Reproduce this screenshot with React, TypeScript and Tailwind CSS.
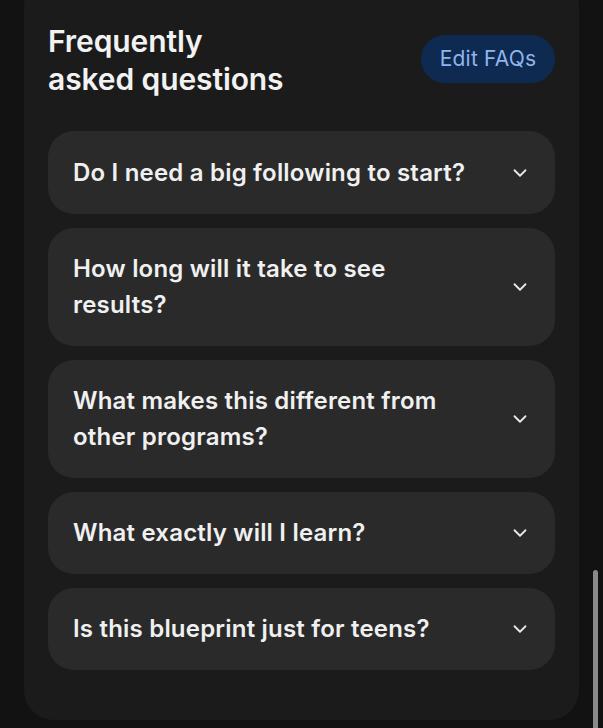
import { ChevronDown } from 'lucide-react';

const faqs = [
  'Do I need a big following to start?',
  'How long will it take to see results?',
  'What makes this different from other programs?',
  'What exactly will I learn?',
  'Is this blueprint just for teens?',
];

export default function App() {
  return (
    <div
      className="relative h-[728px] w-[603px] overflow-hidden bg-[#121212]"
      style={{ fontFamily: 'Inter, "Noto Sans", sans-serif' }}
    >
      <div className="mx-6 -mt-6 h-[744px] rounded-[30px] bg-[#1b1b1b] px-6 pt-[46px]">
        <div className="flex items-start justify-between">
          <h2 className="text-[30px] font-semibold leading-[38px] tracking-[-0.1px] text-[#f2f2f2]">
            Frequently
            <br />
            asked questions
          </h2>
          <button className="mt-[13px] h-12 w-[134px] rounded-full bg-[#0e2a50] text-[21px] tracking-[0.2px] text-[#8fb5ee]">
            Edit FAQs
          </button>
        </div>

        <div className="mt-[33px] flex flex-col gap-[14px]">
          {faqs.map((q, i) => (
            <div
              key={q}
              className={
                'flex items-center justify-between rounded-[26px] bg-[#2a2a2a] pl-[25px] pr-[24px] ' +
                (i === 0 ? 'py-[23.5px]' : 'py-[23px]')
              }
            >
              <span className="max-w-[405px] text-[24px] font-semibold leading-[36px] tracking-[0.2px] text-[#f0f0f0]">
                {q}
              </span>
              <ChevronDown className="h-[22px] w-[22px] text-[#e8e8e8]" strokeWidth={2} />
            </div>
          ))}
        </div>
      </div>

      {/* scrollbar */}
      <div className="absolute right-[5px] top-[570px] h-[170px] w-[5px] rounded-full bg-[#8a8a8a]" />
    </div>
  );
}
